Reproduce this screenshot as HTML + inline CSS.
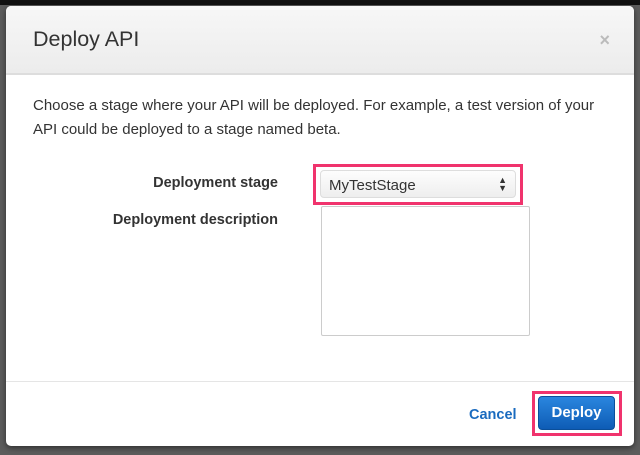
<!DOCTYPE html>
<html><head><style>
body{margin:0;width:640px;height:455px;background:#5c5c5c;font-family:"Liberation Sans",sans-serif;position:relative;overflow:hidden}
.top{position:absolute;left:0;top:0;width:640px;height:5px;background:#111}
.modal{position:absolute;left:6px;top:6px;width:628px;height:440px;background:#fff;border-radius:5px;overflow:hidden;box-shadow:0 2px 6px rgba(0,0,0,.5)}
.hd{height:67px;background:linear-gradient(#f7f7f7,#ececec);border-bottom:2px solid #ddd;position:relative}
.hd h1{margin:0;position:absolute;left:27px;top:21px;font-size:21.5px;font-weight:normal;color:#333}
.x{position:absolute;right:24px;top:24px;font-size:18px;color:#bbb;font-weight:bold}
.p{position:absolute;left:33px;top:94px;font-size:15px;color:#333;line-height:24px;width:570px}
.lbl{position:absolute;font-size:14.5px;font-weight:bold;color:#333;text-align:right;width:220px}
.hl{position:absolute;border:3px solid #f0336d;box-sizing:border-box}
.sel{position:absolute;left:320px;top:170px;width:196px;height:28px;border:1px solid #ddd;border-radius:4px;background:linear-gradient(#fdfdfd,#eee);box-sizing:border-box;font-size:15px;color:#333;padding:6px 8px}
.sel span{position:absolute;right:8px;top:5px;font-size:9px;line-height:8px}
.ta{position:absolute;left:321px;top:206px;width:209px;height:130px;border:1px solid #ccc;border-radius:2px;box-sizing:border-box}
.ft{position:absolute;left:0;top:381px;width:628px;border-top:1px solid #e5e5e5}
.cancel{position:absolute;left:469px;top:407px;font-size:14.5px;font-weight:bold;color:#1a6bbf}
.dep{position:absolute;left:538px;top:396px;width:77px;height:34px;border-radius:4px;background:linear-gradient(#2a86df,#0e5cb5);border:1px solid #0b4f9a;box-sizing:border-box;color:#fff;font-weight:bold;font-size:15px;text-align:center;line-height:32px}
</style></head><body>
<div class="top"></div>
<div class="modal">
<div class="hd"><h1>Deploy API</h1><div class="x">×</div></div>
</div>
<div class="p">Choose a stage where your API will be deployed. For example, a test version of your API could be deployed to a stage named beta.</div>
<div class="lbl" style="left:58px;top:175px">Deployment stage</div>
<div class="lbl" style="left:58px;top:212px">Deployment description</div>
<div class="hl" style="left:313px;top:164px;width:210px;height:41px"></div>
<div class="sel">MyTestStage<span>▲<br>▼</span></div>
<div class="ta"></div>
<div class="ft" style="left:6px"></div>
<div class="cancel">Cancel</div>
<div class="hl" style="left:532px;top:391px;width:90px;height:45px"></div>
<div class="dep">Deploy</div>
</body></html>
